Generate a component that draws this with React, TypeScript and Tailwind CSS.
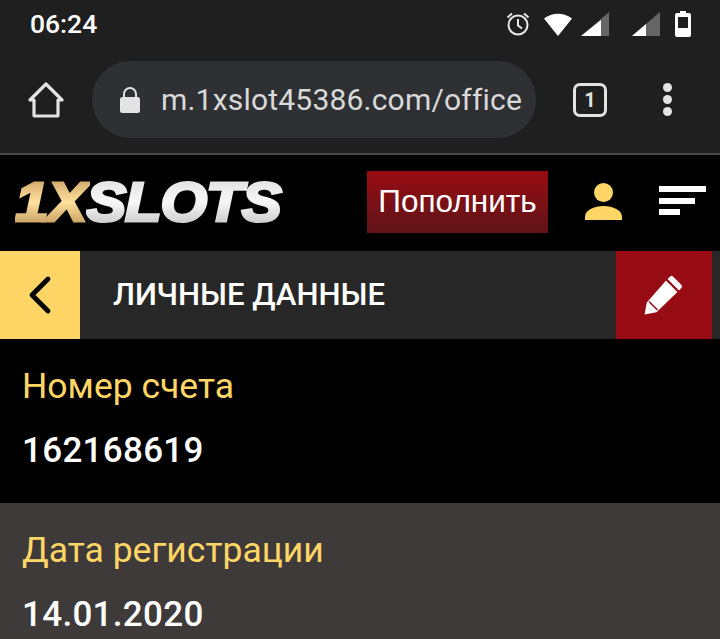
import { ChevronLeft } from "lucide-react";

const font = "font-['Roboto',sans-serif]";

function StatusIcons() {
  return (
    <div className="flex items-center">
      {/* alarm */}
      <svg width="26" height="26" viewBox="0 0 26 26" fill="none" stroke="#e8e8e8" strokeWidth="2" className="ml-[1px]">
        <circle cx="13" cy="14" r="9.5" />
        <path d="M13 8v6.5l4 3M2.5 6.500 7 2.500M23.500 6.500 19 2.500" />
      </svg>
      {/* wifi */}
      <svg width="30" height="26" viewBox="0 0 30 26" className="ml-[12px]">
        <path d="M1 7.500C9 1 21 1 29 7.500L15 25z" fill="#fff" />
      </svg>
      {/* signal 1 */}
      <svg width="28" height="26" viewBox="0 0 28 26" className="ml-[8px]">
        <path d="M28 1v24H0z" fill="#666" />
        <path d="M20 9v16H0z" fill="#fff" />
      </svg>
      {/* signal 2 */}
      <svg width="28" height="26" viewBox="0 0 28 26" className="ml-[23px]">
        <path d="M28 1v24H0z" fill="#666" />
        <path d="M14 13v12H0z" fill="#fff" />
      </svg>
      {/* battery */}
      <svg width="16" height="26" viewBox="0 0 16 26" className="ml-[15px]">
        <path d="M5 0h6v2h3a2 2 0 0 1 2 2v20a2 2 0 0 1-2 2H2a2 2 0 0 1-2-2V4a2 2 0 0 1 2-2h3z" fill="#fff" />
        <rect x="3" y="6" width="10" height="11" fill="#1f1f1f" />
      </svg>
    </div>
  );
}

function Row({ label, value, className }: { label: string; value: string; className: string }) {
  return (
    <div className={`px-[22px] ${className}`}>
      <div className="text-[35.500px] leading-[38px] text-[#ffd666]">{label}</div>
      <div className="mt-[27px] text-[35px] leading-[38px] font-medium text-white tracking-[0.3px]">{value}</div>
    </div>
  );
}

export default function App() {
  return (
    <div className={`w-[720px] h-[639px] overflow-hidden bg-black ${font}`}>
      {/* android status bar */}
      <div className="h-[48px] bg-[#1f1f1f] flex items-center justify-between pl-[30px] pr-[29px]">
        <span className="text-[26.500px] font-medium text-white">06:24</span>
        <StatusIcons />
      </div>

      {/* chrome toolbar */}
      <div className="h-[105px] bg-[#1f1f1f] flex items-center pb-[2px]">
        <svg width="36" height="36" viewBox="0 0 36 36" fill="none" stroke="#e3e3e3" strokeWidth="3.200" strokeLinejoin="round" className="ml-[28px]">
          <path d="M2 18 18 2l16 16h-4v15a1 1 0 0 1-1 1H7a1 1 0 0 1-1-1V18z" />
        </svg>
        <div className="ml-[28px] w-[444px] h-[77px] rounded-[38px] bg-[#2e3033] flex items-center">
          <svg width="20" height="26" viewBox="0 0 20 26" className="ml-[28px] shrink-0">
            <path d="M4 11V7a6 6 0 0 1 12 0v4" fill="none" stroke="#e3e3e3" strokeWidth="2" />
            <rect x="0" y="10" width="20" height="16" rx="2.500" fill="#e3e3e3" />
          </svg>
          <span className="ml-[21px] text-[30px] text-[#d9d9d9] whitespace-nowrap tracking-[0.2px]">m.1xslot45386.com/office</span>
        </div>
        <div className="ml-[37px] w-[34px] h-[34px] rounded-[7px] border-[3px] border-[#e3e3e3] flex items-center justify-center text-[20px] font-bold text-[#e3e3e3]">
          1
        </div>
        <div className="ml-[56px] flex flex-col gap-[3px]">
          <span className="w-[9px] h-[9px] rounded-full bg-[#e3e3e3]" />
          <span className="w-[9px] h-[9px] rounded-full bg-[#e3e3e3]" />
          <span className="w-[9px] h-[9px] rounded-full bg-[#e3e3e3]" />
        </div>
      </div>
      <div className="h-[2px] bg-[#4a4a4a]" />

      {/* site header */}
      <div className="h-[96px] bg-black flex items-center">
        <div className="ml-[15px] w-[268px] shrink-0">
          <div className="flex origin-left scale-x-[1.09] italic font-black font-['Liberation_Sans',sans-serif] text-[55px] leading-[60px] tracking-[-1px] [-webkit-text-stroke:3px_transparent] mt-[-3px]">
            <span className="bg-gradient-to-b from-[#c2955a] via-[#ffe19c] to-[#b58b50] bg-clip-text text-transparent pr-[4px]">1X</span>
            <span className="bg-gradient-to-b from-[#dcdcdc] via-[#f7f7f7] to-[#bdbdbd] bg-clip-text text-transparent pr-[4px] -ml-[4px]">SLOTS</span>
          </div>
        </div>
        <div className="ml-[84px] mt-[-2px] w-[181px] h-[62px] bg-gradient-to-b from-[#980b12] to-[#5e1218] flex items-center justify-center text-[31.500px] text-white font-['Liberation_Sans',sans-serif]">
          Пополнить
        </div>
        <svg width="37" height="37" viewBox="0 0 37 37" fill="#ffd666" className="ml-[37px] mt-[-4px]">
          <circle cx="18.500" cy="9.500" r="9.500" />
          <path d="M0 37v-3C0 27 9 23 18.500 23S37 27 37 34v3z" />
        </svg>
        <div className="ml-[37px] flex flex-col gap-[5.500px] mt-[-5px]">
          <span className="w-[47px] h-[6px] bg-white" />
          <span className="w-[36px] h-[6px] bg-white" />
          <span className="w-[21px] h-[6px] bg-white" />
        </div>
      </div>

      {/* page title bar */}
      <div className="h-[88px] bg-[#272727] flex items-center pr-[8px]">
        <div className="w-[80px] h-full bg-[#ffd666] flex items-center justify-center">
          <ChevronLeft size={64} strokeWidth={1.800} className="text-black" />
        </div>
        <span className="ml-[33px] text-[31.100px] font-medium text-white">ЛИЧНЫЕ ДАННЫЕ</span>
        <div className="ml-auto w-[96px] h-full bg-[#970b12] flex items-center justify-center">
          <svg width="40" height="40" viewBox="0 0 40 40" fill="#fff">
            <path d="m29 1.500 8.500 8.500a2 2 0 0 1 0 2.800L35 15.400 23.600 4 26.200 1.500a2 2 0 0 1 2.800 0zM22 5.600 33.400 17 12.500 37.200 0.600 39.400 2.800 27.500z" />
            <path d="M5 26.500 13.500 35" stroke="#970b12" strokeWidth="1.500" />
          </svg>
        </div>
      </div>

      {/* account data */}
      <Row label="Номер счета" value="162168619" className="h-[164px] bg-black pt-[28px]" />
      <Row label="Дата регистрации" value="14.01.2020" className="h-[136px] bg-[#3e3a3a] pt-[28px]" />
    </div>
  );
}
